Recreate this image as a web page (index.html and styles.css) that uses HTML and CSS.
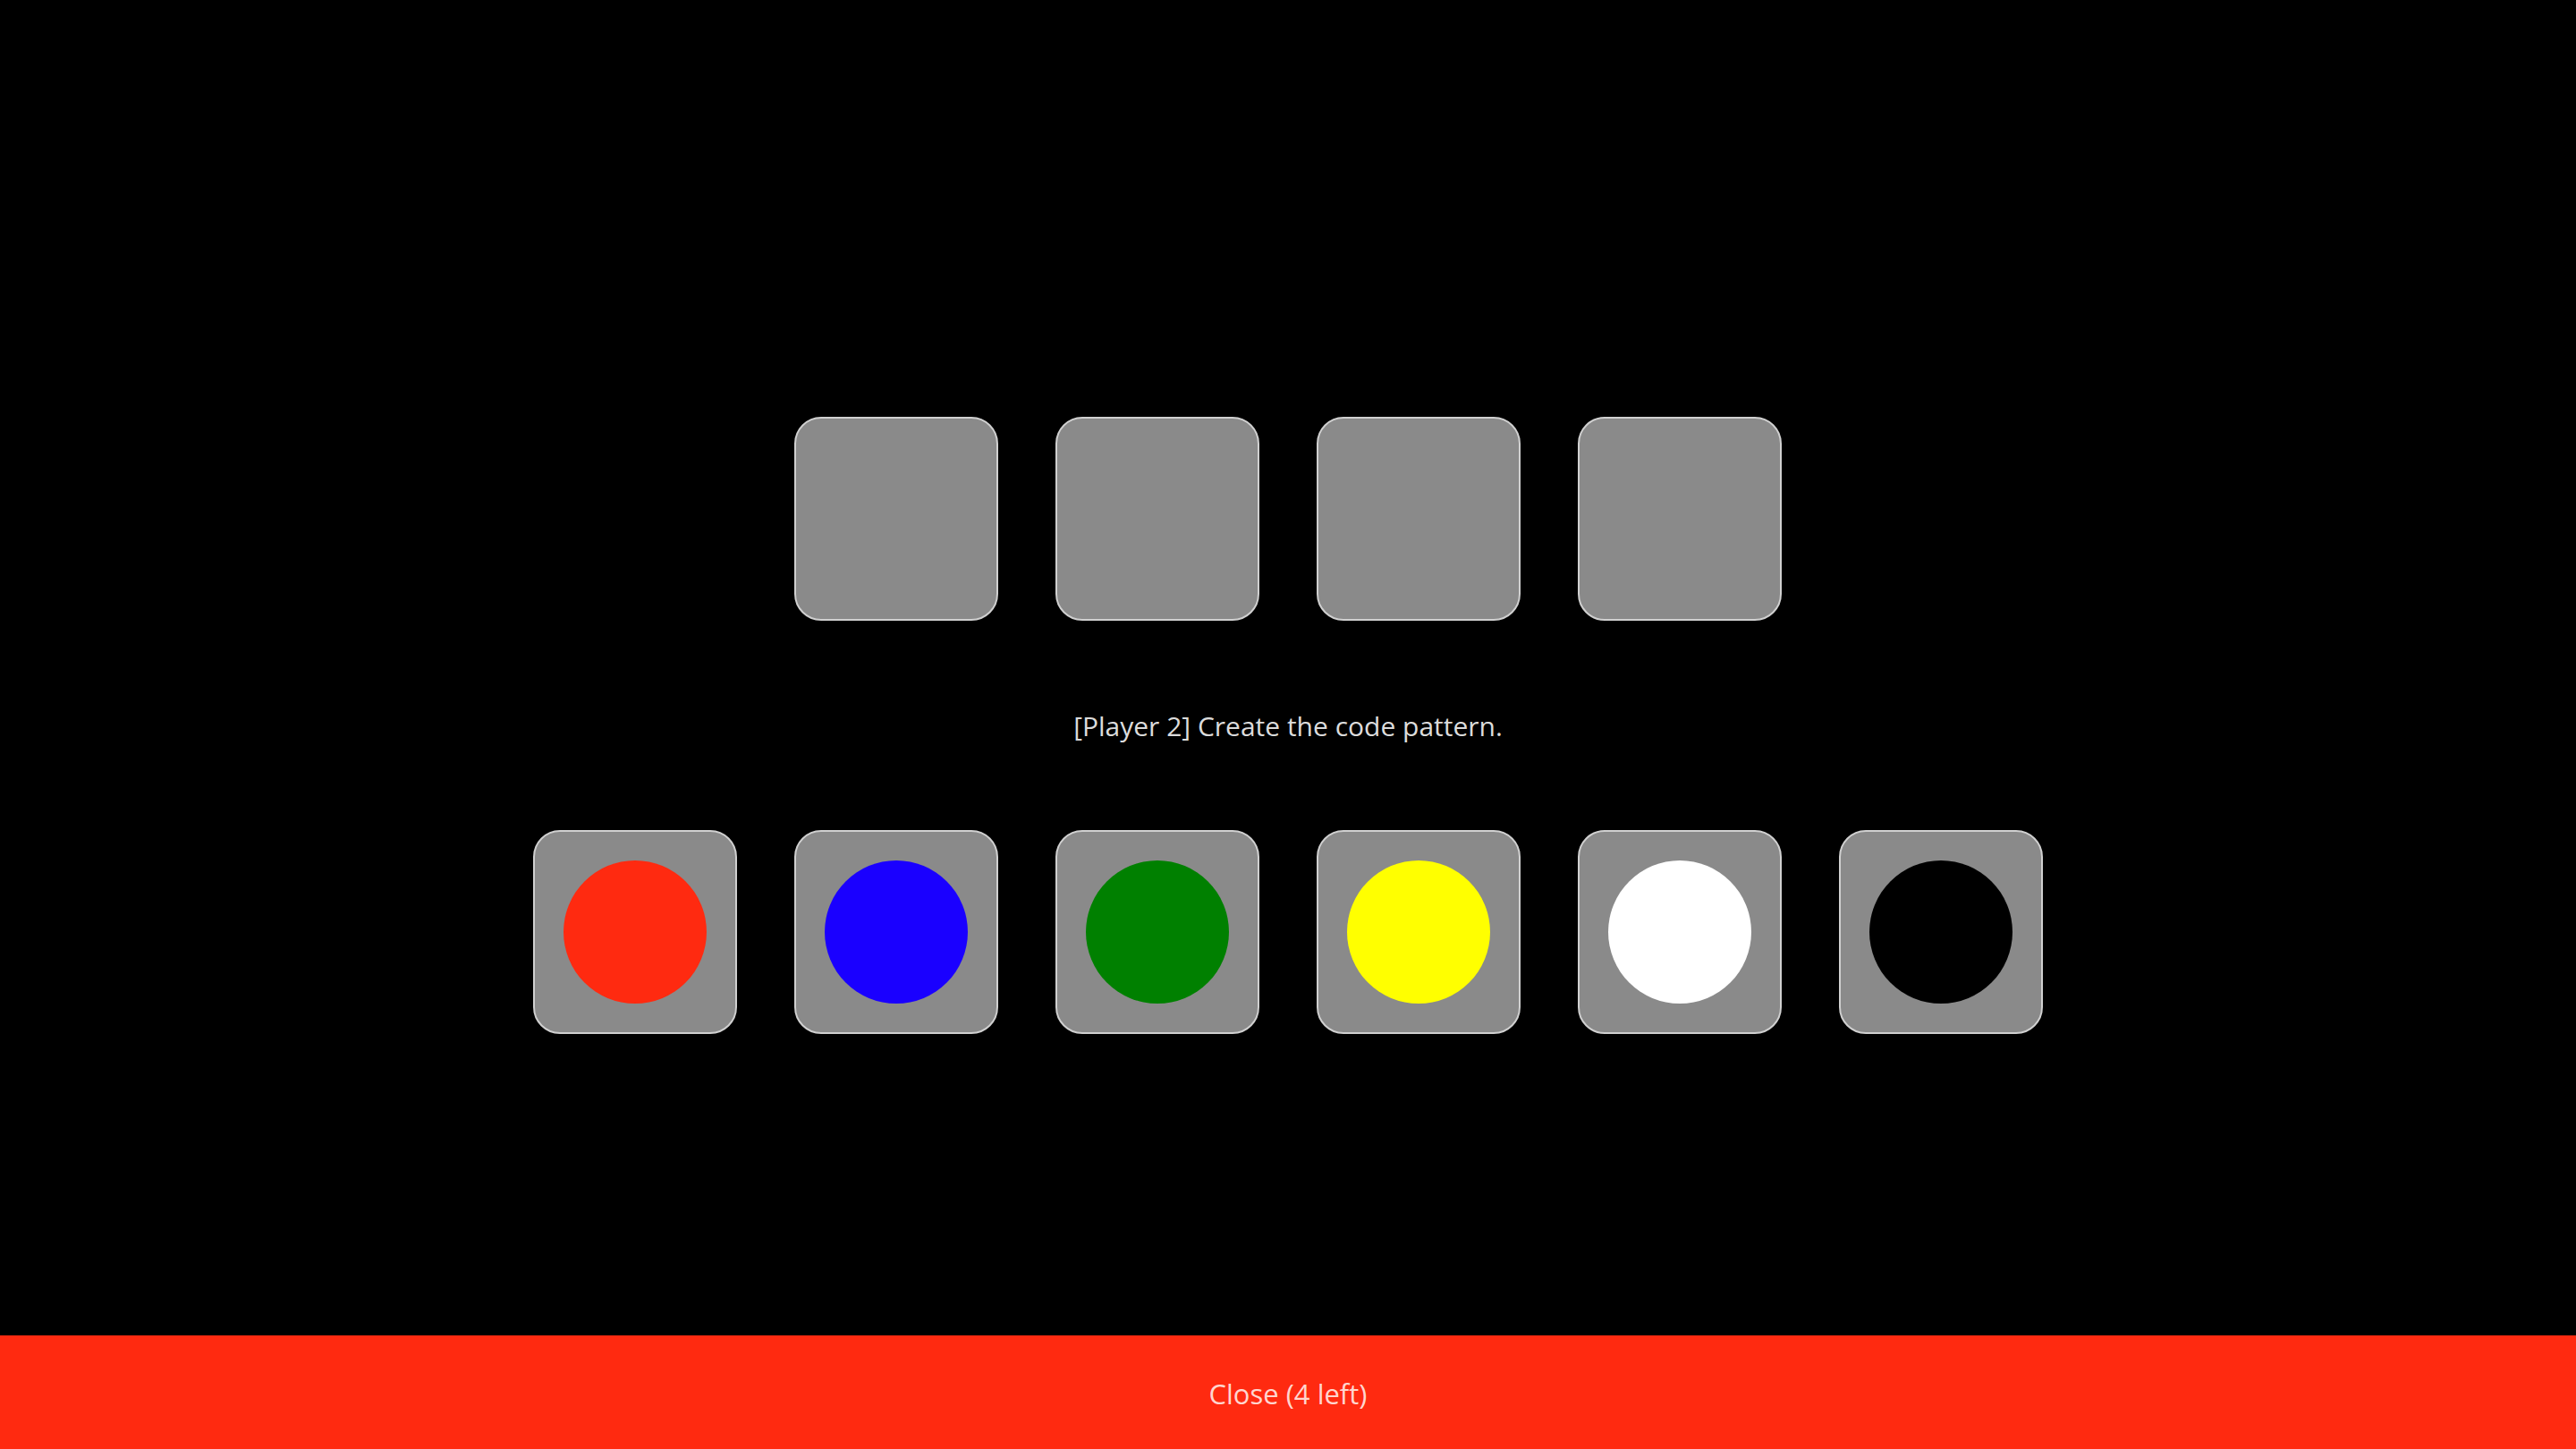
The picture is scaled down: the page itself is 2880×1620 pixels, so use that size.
FILE: index.html
```html
<!DOCTYPE html>
<html>
<head>
<meta charset="utf-8">
<link rel="stylesheet" href="styles.css">
</head>
<body>
<div class="app">
  <main class="board">
    <div class="row">
      <div class="slot"></div>
      <div class="slot"></div>
      <div class="slot"></div>
      <div class="slot"></div>
    </div>
    <p class="prompt">[Player 2] Create the code pattern.</p>
    <div class="row">
      <div class="slot"><span class="peg red"></span></div>
      <div class="slot"><span class="peg blue"></span></div>
      <div class="slot"><span class="peg green"></span></div>
      <div class="slot"><span class="peg yellow"></span></div>
      <div class="slot"><span class="peg white"></span></div>
      <div class="slot"><span class="peg black"></span></div>
    </div>
  </main>
  <footer class="close-bar">Close (4 left)</footer>
</div>
</body>
</html>
```

FILE: styles.css
```css
html, body {
  margin: 0;
  padding: 0;
  background: #000;
}
.app {
  width: 2880px;
  height: 1620px;
  display: flex;
  flex-direction: column;
  font-family: "Open Sans", "Noto Sans", sans-serif;
}
.board {
  flex: 1;
  display: flex;
  flex-direction: column;
  align-items: center;
  padding-top: 466px;
}
.row {
  display: flex;
  gap: 64px;
}
.slot {
  width: 224px;
  height: 224px;
  background: #8a8a8a;
  border: 2px solid #d0d0d0;
  border-radius: 30px;
  display: flex;
  align-items: center;
  justify-content: center;
}
.prompt {
  margin: 0;
  height: 234px;
  box-sizing: border-box;
  padding-top: 96px;
  color: #dcdcdc;
  font-size: 30px;
  line-height: 44px;
}
.peg {
  width: 160px;
  height: 160px;
  border-radius: 50%;
}
.red { background: #ff2a10; }
.blue { background: #1a00ff; }
.green { background: #008000; }
.yellow { background: #ffff00; }
.white { background: #ffffff; }
.black { background: #000000; }
.close-bar {
  height: 127px;
  padding-top: 2px;
  box-sizing: border-box;
  background: #ff2a10;
  color: #ffd6cf;
  display: flex;
  align-items: center;
  justify-content: center;
  font-size: 31px;
}
```
